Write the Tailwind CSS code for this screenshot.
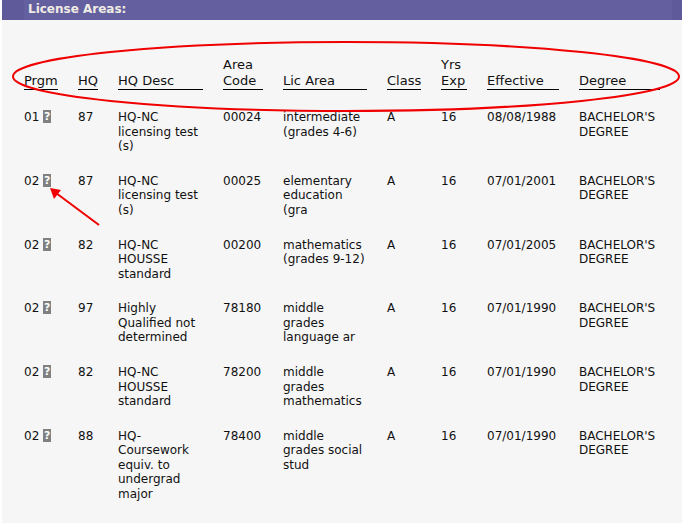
<!DOCTYPE html>
<html><head><meta charset="utf-8"><script src="https://cdn.jsdelivr.net/npm/@tailwindcss/browser@4"></script></head>
<body class="bg-white">
<div class="relative w-[689px] h-[526px] overflow-hidden bg-white font-['DejaVu_Sans',sans-serif] text-[12px] leading-[14.5px] text-[#111]">
<div class="ml-[2px] w-[680px] h-[523px] bg-[#f6f6f6]">
<div class="flex h-[20px] bg-[#64609f] text-[12px] font-bold leading-[19px] text-[#f0ece4]">
<div class="w-[22px] bg-[#5f5b9b]"></div>
<div class="flex-1 pl-[4px]">License Areas:</div>
<div class="w-[10px] bg-[#5f5b9b]"></div>
</div>
<table class="ml-[22px] mt-[37px] table-fixed border-collapse w-[640px]">
<colgroup><col class="w-[54px]"><col class="w-[40px]"><col class="w-[105px]"><col class="w-[60px]"><col class="w-[104px]"><col class="w-[54px]"><col class="w-[46px]"><col class="w-[92px]"><col class="w-[85px]"></colgroup>
<thead><tr class="h-[32px] align-bottom text-left text-[13px] leading-[16px]">
<th class="p-0 font-normal"><div class="w-[34px] border-b border-black">Prgm</div></th>
<th class="p-0 font-normal"><div class="w-[20px] border-b border-black">HQ</div></th>
<th class="p-0 font-normal"><div class="w-[85px] border-b border-black">HQ Desc</div></th>
<th class="p-0 font-normal"><div class="w-[40px] border-b border-black">Area Code</div></th>
<th class="p-0 font-normal"><div class="w-[84px] border-b border-black">Lic Area</div></th>
<th class="p-0 font-normal"><div class="w-[34px] border-b border-black">Class</div></th>
<th class="p-0 font-normal"><div class="w-[26px] border-b border-black">Yrs Exp</div></th>
<th class="p-0 font-normal"><div class="w-[72px] border-b border-black">Effective</div></th>
<th class="p-0 font-normal"><div class="w-[81px] border-b border-black">Degree</div></th>
</tr></thead>
<tbody class="align-top">
<tr class="h-[20px]"><td colspan="9" class="p-0"></td></tr>
<tr class="h-[63.8px]"><td class="p-0">01 <span class="inline-block h-[13px] w-[8px] bg-[#808080] text-center align-top text-[11px] font-bold leading-[13px] text-white">?</span></td><td class="p-0">87</td><td class="p-0">HQ-NC<br>licensing test<br>(s)</td><td class="p-0">00024</td><td class="p-0">intermediate (grades 4-6)</td><td class="p-0">A</td><td class="p-0">16</td><td class="p-0">08/08/1988</td><td class="p-0">BACHELOR'S DEGREE</td></tr>
<tr class="h-[63.8px]"><td class="p-0">02 <span class="inline-block h-[13px] w-[8px] bg-[#808080] text-center align-top text-[11px] font-bold leading-[13px] text-white">?</span></td><td class="p-0">87</td><td class="p-0">HQ-NC<br>licensing test<br>(s)</td><td class="p-0">00025</td><td class="p-0">elementary<br>education<br>(gra</td><td class="p-0">A</td><td class="p-0">16</td><td class="p-0">07/01/2001</td><td class="p-0">BACHELOR'S DEGREE</td></tr>
<tr class="h-[63.8px]"><td class="p-0">02 <span class="inline-block h-[13px] w-[8px] bg-[#808080] text-center align-top text-[11px] font-bold leading-[13px] text-white">?</span></td><td class="p-0">82</td><td class="p-0">HQ-NC<br>HOUSSE<br>standard</td><td class="p-0">00200</td><td class="p-0">mathematics (grades 9-12)</td><td class="p-0">A</td><td class="p-0">16</td><td class="p-0">07/01/2005</td><td class="p-0">BACHELOR'S DEGREE</td></tr>
<tr class="h-[63.8px]"><td class="p-0">02 <span class="inline-block h-[13px] w-[8px] bg-[#808080] text-center align-top text-[11px] font-bold leading-[13px] text-white">?</span></td><td class="p-0">97</td><td class="p-0">Highly<br>Qualified not<br>determined</td><td class="p-0">78180</td><td class="p-0">middle<br>grades<br>language ar</td><td class="p-0">A</td><td class="p-0">16</td><td class="p-0">07/01/1990</td><td class="p-0">BACHELOR'S DEGREE</td></tr>
<tr class="h-[63.8px]"><td class="p-0">02 <span class="inline-block h-[13px] w-[8px] bg-[#808080] text-center align-top text-[11px] font-bold leading-[13px] text-white">?</span></td><td class="p-0">82</td><td class="p-0">HQ-NC<br>HOUSSE<br>standard</td><td class="p-0">78200</td><td class="p-0">middle<br>grades<br>mathematics</td><td class="p-0">A</td><td class="p-0">16</td><td class="p-0">07/01/1990</td><td class="p-0">BACHELOR'S DEGREE</td></tr>
<tr><td class="p-0">02 <span class="inline-block h-[13px] w-[8px] bg-[#808080] text-center align-top text-[11px] font-bold leading-[13px] text-white">?</span></td><td class="p-0">88</td><td class="p-0">HQ-<br>Coursework<br>equiv. to<br>undergrad<br>major</td><td class="p-0">78400</td><td class="p-0">middle<br>grades social<br>stud</td><td class="p-0">A</td><td class="p-0">16</td><td class="p-0">07/01/1990</td><td class="p-0">BACHELOR'S DEGREE</td></tr>
</tbody></table>
</div>
<svg class="absolute left-0 top-0" width="689" height="526" fill="none"><ellipse cx="346" cy="76.5" rx="333" ry="34.5" stroke="#f00000" stroke-width="2"/><path d="M99 225 L56 193" stroke="#f00000" stroke-width="2"/><path d="M50 188 L61 190 L54 199 Z" fill="#f00000"/></svg>
</div>
</body></html>
